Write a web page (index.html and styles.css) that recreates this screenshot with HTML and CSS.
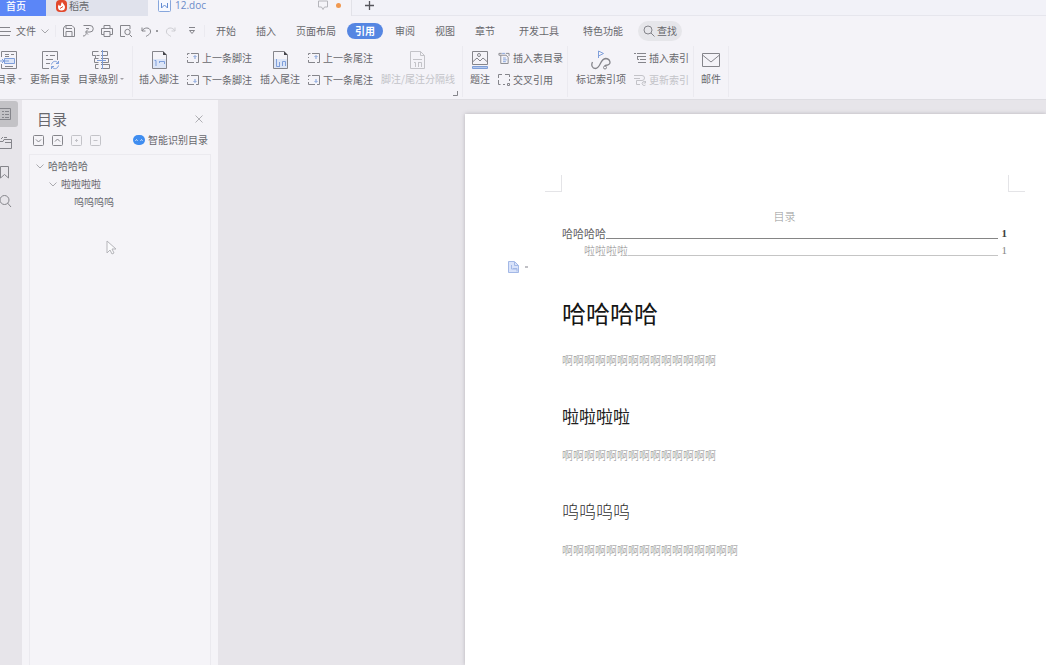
FILE: index.html
```html
<!DOCTYPE html>
<html lang="zh-CN">
<head>
<meta charset="utf-8">
<meta name="viewport" content="width=device-width, initial-scale=1">
<title>12.doc</title>
<link rel="stylesheet" href="styles.css">
</head>
<body>
<svg class="defs" aria-hidden="true">
  <symbol id="prev" viewBox="0 0 12 12"><path class="s" d="M.5 3V1.500h2M4 1.500h7.500v9H9M.5 5v1M.5 8v2.500H7"/><path class="b" d="M8 7V4M6.500 5L8 3.500 9.500 5"/></symbol>
  <symbol id="next" viewBox="0 0 12 12"><path class="s" d="M.5 3V1.500h2M4 1.500h7.500v9H9M.5 5v1M.5 8v2.500H7"/><path class="b" d="M8 5v3M6.500 7L8 8.500 9.500 7"/></symbol>
  <symbol id="down" viewBox="0 0 8 8"><path class="s" d="M.5 2.500L4 6l3.500-3.500"/></symbol>
</svg>

<nav class="tabs">
  <button class="tab home">首页</button>
  <button class="tab docer"><svg width="11" height="12" viewBox="0 0 11 12"><rect width="11" height="12" rx="4" fill="#e2482c"/><path d="M6 2c1 2 3 3 3 5a3.500 3.500 0 0 1-7 0c0-1 .5-2 1-2.500.3 1 .8 1.500 1.500 1.500C5 5 5 3.500 6 2z" fill="#fff"/><path d="M4 8.500l3-2" stroke="#e2482c" fill="none"/></svg>稻壳</button>
  <button class="tab file"><svg width="13" height="13" viewBox="0 0 13 13"><rect x=".5" y=".5" width="12" height="12" rx="1" fill="#f7f9ff" stroke="#87a6dc"/><path d="M3.500 4v5l3-3 3 3V4" fill="none" stroke="#628bd2"/></svg><span>12.doc</span>
    <svg class="monitor" width="10" height="11" viewBox="0 0 10 11"><path d="M.5 1h9v6h-3L5 9.500 3.500 7h-3z" fill="none" stroke="#b5b5bb"/></svg><i class="dirty"></i></button>
  <button class="plus" aria-label="新建"><svg width="11" height="11" viewBox="0 0 11 11"><path d="M5.500 1v9M1 5.500h9" stroke="#55555b" stroke-width="1.300"/></svg></button>
</nav>

<nav class="menu">
  <button class="filemenu"><svg width="11" height="10" viewBox="0 0 11 10"><path class="s" d="M0 1.500h10M0 5.500h11M0 9.500h10"/></svg>文件<svg class="chev" width="8" height="8"><use href="#down"/></svg></button>
  <div class="quick">
    <button aria-label="保存"><svg width="12" height="12" viewBox="0 0 12 12"><path class="s" d="M.5 3v8.500h11V3L9 .5H2.500zM3 .5v3h6M3 11V6.500h6V11"/></svg></button>
    <button aria-label="输出"><svg width="12" height="12" viewBox="0 0 12 12"><path class="s" d="M1.500.5H8a3.200 3.200 0 0 1 0 6.500H4M4 3.500h3M6 4.500L3.500 7 6 9.500M1 11c2 0 3-1 3-2.500"/></svg></button>
    <button aria-label="打印"><svg width="12" height="12" viewBox="0 0 12 12"><path class="s" d="M3 3.500v-3h6v3M3 9.500H.5v-6h11v6H9M3 6.500h6v5H3z"/></svg></button>
    <button aria-label="预览"><svg width="13" height="12" viewBox="0 0 13 12"><path class="s" d="M5 11.500H.5V.5H10V4M9.500 9.500L12 12"/><circle class="s" cx="7.500" cy="7" r="2.700"/></svg></button>
    <button class="undo" aria-label="撤销"><svg width="11" height="11" viewBox="0 0 11 11"><path class="s" d="M1 1.500V5h3.500M1 5c2-4 8-4 8.500 0C10 8 7 9 5 10.500"/></svg><i></i></button>
    <button class="redo" aria-label="恢复"><svg width="11" height="11" viewBox="0 0 11 11"><path class="s" d="M10 1.500V5H6.500M10 5C8 1 2 1 1.500 5 1 8 4 9 6 10.500"/></svg></button>
    <button class="more" aria-label="更多"><svg width="8" height="8" viewBox="0 0 8 8"><path class="s" d="M1 .5h6M1.500 3.500h5L4 6.500z"/></svg></button>
  </div>
  <div class="items">
    <button>开始</button><button>插入</button><button>页面布局</button><button class="current">引用</button><button>审阅</button><button>视图</button><button>章节</button><button class="wide">开发工具</button><button class="wide">特色功能</button>
  </div>
  <button class="find"><svg width="12" height="12" viewBox="0 0 12 12"><circle class="s" cx="5" cy="5" r="4"/><path class="s" d="M8 8l3.500 3.500"/></svg>查找</button>
</nav>

<section class="ribbon">
  <div class="group first">
    <button class="big"><svg width="18" height="20" viewBox="0 0 18 20"><path class="s" d="M1.500 7V1.500h15v17h-15V14M5 4.500h4M5 6.500h4M11 4.500h3M5 16.500h8"/><path d="M5 9h9v4H5z" fill="#dce5f7"/><path class="b" d="M4.500 8.500h10v5h-10zM0 11h9M2 9l2 2-2 2"/></svg><span>目录<i class="caret"></i></span></button>
    <button class="big"><svg width="20" height="20" viewBox="0 0 20 20"><path class="s" d="M9 18.500H2.500v-17h15V10M6 5.500h2M10 5.500h5M6 9.500h7M6 13.500h4"/><path class="b" d="M11.500 14.500c1-4 5-4 7-1V11M18.500 13.500H16M18.500 15.500c-1 4-5 4-7 1V19M11.500 16.500H14"/></svg><span>更新目录</span></button>
    <button class="big"><svg width="20" height="20" viewBox="0 0 20 20"><path class="s" d="M4.500 5.500h-3v-4h6M5.500 5.500h3M10 1.500h6.500v4H10M4.500 5.500v3M10 8.500h7.500v4H10M7.500 8.500h-4v4h4M10 14.500h8.500v4H10M7.500 14.500h-3v4h3"/><path class="b" d="M11.500 0v7M11.500 7v7M6 10.500h9M11.500 14v5"/></svg><span>目录级别<i class="caret"></i></span></button>
  </div>
  <div class="group notes">
    <button class="big"><svg width="17" height="20" viewBox="0 0 17 20"><path d="M2 9h13v9H2z" fill="#dce5f7"/><path class="s" d="M12 1.500H1.500v17h14V5"/><path d="M12 1l4 4h-4z" fill="#45454b"/><path class="b" d="M3.500 10.500H5V16M8.500 11v2M8.500 11.500h5V14"/></svg><span>插入脚注</span></button>
    <div class="pair"><button><svg width="12" height="12"><use href="#prev"/></svg>上一条脚注</button><button><svg width="12" height="12"><use href="#next"/></svg>下一条脚注</button></div>
    <button class="big"><svg width="17" height="20" viewBox="0 0 17 20"><path d="M2 9h13v9H2z" fill="#dce5f7"/><path class="s" d="M12 1.500H1.500v17h14V5"/><path d="M12 1l4 4h-4z" fill="#45454b"/><path class="b" d="M4.500 9v7.500H8M7.500 12v4M10.500 16v-4.500h3V16"/></svg><span>插入尾注</span></button>
    <div class="pair"><button><svg width="12" height="12"><use href="#prev"/></svg>上一条尾注</button><button><svg width="12" height="12"><use href="#next"/></svg>下一条尾注</button></div>
    <button class="big off" disabled><svg width="17" height="20" viewBox="0 0 17 20"><path class="s" d="M11.500 1.500h-10v17h14v-13zV5.500h4M4 9.500h9M5 12.500h1.500V17M9 12.500h3.500V17M9.500 12v5"/></svg><span>脚注/尾注分隔线</span></button>
    <svg class="launcher" width="5" height="5" viewBox="0 0 5 5"><path class="s" d="M4.500 0v4.500H0"/></svg>
  </div>
  <div class="group captions">
    <button class="big"><svg width="18" height="20" viewBox="0 0 18 20"><path class="s" d="M1.500 1.500h15v13h-15zM1.500 12L6 8l3 3 3-3 4.500 4"/><circle class="s" cx="8" cy="5" r="1.500"/><path d="M1.500 16.500h15v2h-15z" fill="#b4c8ed" stroke="#7e9ed7"/></svg><span>题注</span></button>
    <div class="pair"><button><svg width="12" height="12" viewBox="0 0 12 13"><path class="s" d="M2.500 3.500H.5V1.500h3M8 1.500h3.500v3M2.500 3.500v9h8V6l-2-2.500z"/><path class="b" d="M5 6.500h3M5 8.500h4M5 10.500h3M4 1.500h3"/></svg>插入表目录</button><button><svg width="12" height="12" viewBox="0 0 12 12"><path class="s" d="M4 .5H.5V4M.5 6v4.500h2M5 10.500h2M7 .5h4.500V3M11.500 5v2M9.500 9.500h2v2h-2z"/></svg>交叉引用</button></div>
  </div>
  <div class="group index">
    <button class="big"><svg width="20" height="20" viewBox="0 0 20 20"><path class="b" d="M7.500 8V1l5 2.500-5 2.500"/><path class="s" stroke-width="1.300" d="M1.500 12C0 15 1 18.500 4.500 18.500c5 0 4.500-9.500 10-10 5 0 6 6 2 6.500-1.500 0-2.500 0-2.500 1"/><circle class="s" cx="14" cy="17.500" r="1.500"/></svg><span>标记索引项</span></button>
    <div class="pair"><button><svg width="12" height="12" viewBox="0 0 12 12"><path class="s" d="M0 1.500h2M3 1.500h9M3 4.500h9M3.500 4v3.500H5M6 7.500h6M4 10.500h8"/></svg>插入索引</button><button class="off" disabled><svg width="12" height="12" viewBox="0 0 12 12"><path class="s" d="M0 1.500h8a2.500 2.500 0 0 1 0 5H2.500v4H6M0 4.500h6M11.500 8a2 2 0 1 0 0 3M11.500 7v2h-2"/></svg>更新索引</button></div>
  </div>
  <div class="group mail">
    <button class="big"><svg width="18" height="20" viewBox="0 0 18 20"><path class="s" d="M.5 3.500h17v13H.5zM.5 5L9 12l8.500-7"/></svg><span>邮件</span></button>
  </div>
</section>

<div class="work">
  <nav class="rail">
    <button class="on" aria-label="目录"><svg width="12" height="14" viewBox="0 0 12 14"><path class="s" d="M0 1.500h10.500v11H0M2 4.500h2M5 4.500h4M2 7.500h2M5 7.500h4M2 10.500h2M5 10.500h4"/></svg></button>
    <button aria-label="章节"><svg width="12" height="14" viewBox="0 0 12 14"><path class="s" d="M0 5.500h3l1-2h7.500v9H0M1 3l2-2M4 1.500h3M5 6.500h6"/></svg></button>
    <button aria-label="书签"><svg width="12" height="14" viewBox="0 0 12 14"><path class="s" d="M.5 1.500h8V13l-4-3.500-4 3.500z"/></svg></button>
    <button aria-label="查找"><svg width="12" height="14" viewBox="0 0 12 14"><circle class="s" cx="4.500" cy="6" r="4.500"/><path class="s" d="M7.500 9l3.500 4"/></svg></button>
  </nav>
  <aside class="panel">
    <header><h2>目录</h2><button aria-label="关闭"><svg width="8" height="8" viewBox="0 0 8 8"><path d="M.5.5l7 7M7.500.5l-7 7" stroke="#b0b0b5"/></svg></button></header>
    <div class="tools">
      <button aria-label="展开"><svg width="11" height="11" viewBox="0 0 11 11"><rect class="s" x=".5" y=".5" width="10" height="10" rx="1"/><path class="s" d="M3 4.500L5.500 7 8 4.500"/></svg></button>
      <button aria-label="收起"><svg width="11" height="11" viewBox="0 0 11 11"><rect class="s" x=".5" y=".5" width="10" height="10" rx="1"/><path class="s" d="M3 6.500L5.500 4 8 6.500"/></svg></button>
      <button class="off" disabled aria-label="增加"><svg width="11" height="11" viewBox="0 0 11 11"><rect class="s" x=".5" y=".5" width="10" height="10" rx="1"/><path class="s" d="M4 5.500h3M5.500 4v3"/></svg></button>
      <button class="off" disabled aria-label="减少"><svg width="11" height="11" viewBox="0 0 11 11"><rect class="s" x=".5" y=".5" width="10" height="10" rx="1"/><path class="s" d="M3.500 5.500h4"/></svg></button>
      <button class="smart"><svg width="12" height="11" viewBox="0 0 12 11"><rect x="0" y="0" width="12" height="10" rx="5" fill="#3f8df0"/><path d="M2.500 5.500q1-1.500 2 0M7.500 5.500q1-1.500 2 0" fill="none" stroke="#fff"/></svg>智能识别目录</button>
    </div>
    <div class="tree">
      <a href="#h1"><svg width="8" height="8"><use href="#down"/></svg>哈哈哈哈</a>
      <a class="l2" href="#h2"><svg width="8" height="8"><use href="#down"/></svg>啦啦啦啦</a>
      <a class="l3" href="#h3">呜呜呜呜</a>
      <svg class="cursor" width="11" height="16" viewBox="0 0 11 16"><path d="M1 1v12l3-3 2 4 2-1-2-4h4z" fill="#fafafc" stroke="#b5b5ba"/></svg>
    </div>
  </aside>
  <main class="canvas">
    <article class="page">
      <div class="marks"><i></i><i></i></div>
      <p class="toctitle">目录</p>
      <a class="toc" href="#h1"><span>哈哈哈哈</span><i></i><b>1</b></a>
      <a class="toc sub" href="#h2"><span>啦啦啦啦</span><i></i><span>1</span></a>
      <button class="paste" aria-label="粘贴选项"><svg width="11" height="12" viewBox="0 0 11 12"><path d="M.5.5h6l4 4v7H.5z" fill="#d9e3fa" stroke="#a3b8e6"/><path d="M6.500 1v3.500h4M3.500 4v4H9M5 7.500h4v3" fill="none" stroke="#a3b8e6"/></svg><i></i></button>
      <h1 id="h1">哈哈哈哈</h1>
      <p class="text">啊啊啊啊啊啊啊啊啊啊啊啊啊啊</p>
      <h2 id="h2">啦啦啦啦</h2>
      <p class="text">啊啊啊啊啊啊啊啊啊啊啊啊啊啊</p>
      <h3 id="h3">呜呜呜呜</h3>
      <p class="text">啊啊啊啊啊啊啊啊啊啊啊啊啊啊啊啊</p>
    </article>
  </main>
</div>
</body>
</html>
```

FILE: styles.css
```css
* { box-sizing: border-box; }

body {
  margin: 0;
  min-height: 100vh;
  display: flex;
  flex-direction: column;
  overflow-x: hidden;
  background: #f4f3f8;
  color: #68686d;
  font: 10px/16px "Noto Sans CJK SC", sans-serif;
}

button {
  display: flex;
  align-items: center;
  margin: 0;
  padding: 0;
  border: 0;
  background: none;
  color: inherit;
  font: inherit;
  white-space: nowrap;
}

a { color: inherit; text-decoration: none; }
svg { flex: none; color: #85858b; }
.defs { position: absolute; width: 0; height: 0; }
.s { fill: none; stroke: currentColor; }
.b { fill: none; stroke: #7f9fdb; }
.off, .off svg { color: #c3c3c8; }

/* Document tabs */
.tabs {
  display: flex;
  background: #f2f2f8;
  line-height: 11px;
}
.tab { height: 16px; padding-bottom: 5px; gap: 2px; }
.home {
  width: 46px;
  padding-left: 6px;
  background: #5b86f7;
  color: #fff;
  font-weight: 500;
}
.docer {
  width: 102px;
  padding-left: 10px;
  background: #e0e2ec;
}
.file {
  width: 204px;
  padding-left: 10px;
  padding-right: 10px;
  gap: 4px;
  border-right: 1px solid #e2e2e8;
  background: #f4f3f8;
  color: #6b8bc9;
  font-family: "Open Sans", sans-serif;
}
.monitor { margin-left: auto; }
.dirty {
  width: 5px;
  height: 5px;
  margin-left: 4px;
  border-radius: 50%;
  background: #f09850;
}
.plus {
  flex: 1;
  padding: 0 0 4px 12px;
  border-bottom: 1px solid #e6e6ed;
}

/* Menu row */
.menu {
  display: flex;
  align-items: center;
  height: 30px;
}
.filemenu { gap: 5px; }
.chev { color: #a5a5aa; }
.quick {
  display: flex;
  align-items: center;
  gap: 7px;
  margin-left: 6px;
  padding: 0 8px 0 7px;
  border: solid #ebeaf0;
  border-width: 0 1px;
}
.undo { gap: 4px; margin-left: 1px; }
.undo i { width: 2px; height: 2px; background: #99999e; }
.redo svg { color: #cdcdd2; }
.more { margin-left: 5px; }
.items { display: flex; margin-left: 1px; }
.items button { padding: 0 10px; }
.items .current {
  margin: 0 2px 0 1px;
  padding: 0 8px;
  border-radius: 8px;
  background: #5586e2;
  color: #fff;
  font-weight: 700;
}
.items .wide { margin-left: 4px; }
.find {
  gap: 2px;
  margin-left: 5px;
  padding: 2px 5px;
  border-radius: 10px;
  background: #e6e6ea;
}

/* Ribbon */
.ribbon {
  display: flex;
  border-bottom: 1px solid #dedde2;
}
.group {
  position: relative;
  display: flex;
  align-items: flex-start;
  gap: 8px;
  height: 51px;
  margin-bottom: 2px;
  padding-top: 4px;
  border-right: 1px solid #ebeaf0;
}
.first { margin-left: -4px; padding-right: 8px; }
.notes { padding-left: 6px; padding-right: 7px; }
.captions { padding-left: 7px; padding-right: 4px; }
.index { padding-left: 8px; padding-right: 4px; }
.mail { padding-left: 7px; padding-right: 7px; }
.big { flex-direction: column; gap: 1px; }
.big span { display: flex; align-items: center; }
.caret {
  margin-left: 2px;
  border: 2px solid transparent;
  border-top-color: #a0a0a5;
  border-bottom: 0;
}
.pair {
  display: flex;
  flex-direction: column;
  gap: 6px;
}
.pair button { gap: 3px; }
.launcher {
  position: absolute;
  right: 4px;
  bottom: 1px;
}

/* Work area */
.work {
  display: flex;
  flex: 1;
  background: #e7e5ea;
}
.rail {
  display: flex;
  flex-direction: column;
  gap: 3px;
  width: 22px;
  padding-top: 1px;
}
.rail button { width: 18px; height: 26px; }
.rail .on { border-radius: 0 3px 3px 0; background: #c3c2c6; }
.panel {
  display: flex;
  flex-direction: column;
  width: 196px;
  padding: 8px 7px 0;
  background: #f5f4f8;
}
.panel header {
  display: flex;
  align-items: center;
  justify-content: space-between;
  padding: 0 8px;
}
.panel h2 {
  margin: 0;
  font-size: 15px;
  line-height: 22px;
  font-weight: 400;
}
.tools {
  display: flex;
  align-items: center;
  gap: 8px;
  margin-top: 2px;
  padding: 0 3px 0 4px;
}
.smart { gap: 3px; margin-left: auto; }
.tree {
  position: relative;
  flex: 1;
  margin-top: 6px;
  padding: 2px 6px;
  border: 1px solid #ebeaef;
  border-bottom: 0;
}
.tree a {
  display: flex;
  align-items: center;
  gap: 4px;
  line-height: 18px;
}
.tree a svg { color: #aaaaaf; }
.tree .l2 { padding-left: 13px; }
.tree .l3 { padding-left: 38px; }
.cursor {
  position: absolute;
  left: 76px;
  top: 85px;
}

/* Document */
.canvas {
  display: flex;
  flex: 1;
  padding: 14px 0 0 247px;
}
.page {
  flex: 1;
  padding: 61px 39px 0 97px;
  background: #fff;
  box-shadow: 0 0 4px #b5b3b8;
  font-size: 11px;
  line-height: 17px;
}
.marks {
  display: flex;
  justify-content: space-between;
  margin: 0 -18px 16px -17px;
}
.marks i {
  width: 17px;
  height: 17px;
  border: solid #e4e4e7;
  border-width: 0 1px 1px 0;
}
.marks i + i { border-width: 0 0 1px 1px; }
.page p, .page h1, .page h2, .page h3 { margin: 0; }
.page .toctitle { color: #959595; text-align: center; font-weight: 300; }
.toc { display: flex; color: #606060; }
.toc b, .toc i + span { font-family: "Liberation Serif", serif; }
.toc b { color: #404040; }
.toc i {
  flex: 1;
  height: 14px;
  margin-right: 4px;
  border-bottom: 1px solid #858585;
}
.toc.sub { padding-left: 22px; color: #858585; font-weight: 300; }
.toc.sub i { border-color: #c5c5c5; }
.paste { gap: 6px; height: 15px; margin-left: -54px; }
.paste i { width: 3px; height: 2px; background: #c0c0c5; }
.page h1 {
  margin-top: 23px;
  color: #161616;
  font-size: 24px;
  line-height: 32px;
  font-weight: 400;
}
.page .text {
  margin-top: 23px;
  color: #858585;
  line-height: 16px;
  font-weight: 300;
}
.page h2, .page h3 {
  margin-top: 36px;
  color: #202020;
  font-size: 17px;
  line-height: 24px;
  font-weight: 400;
}
.page h3 { color: #303030; font-weight: 300; }
.page h2 + .text, .page h3 + .text { margin-top: 19px; }
```
